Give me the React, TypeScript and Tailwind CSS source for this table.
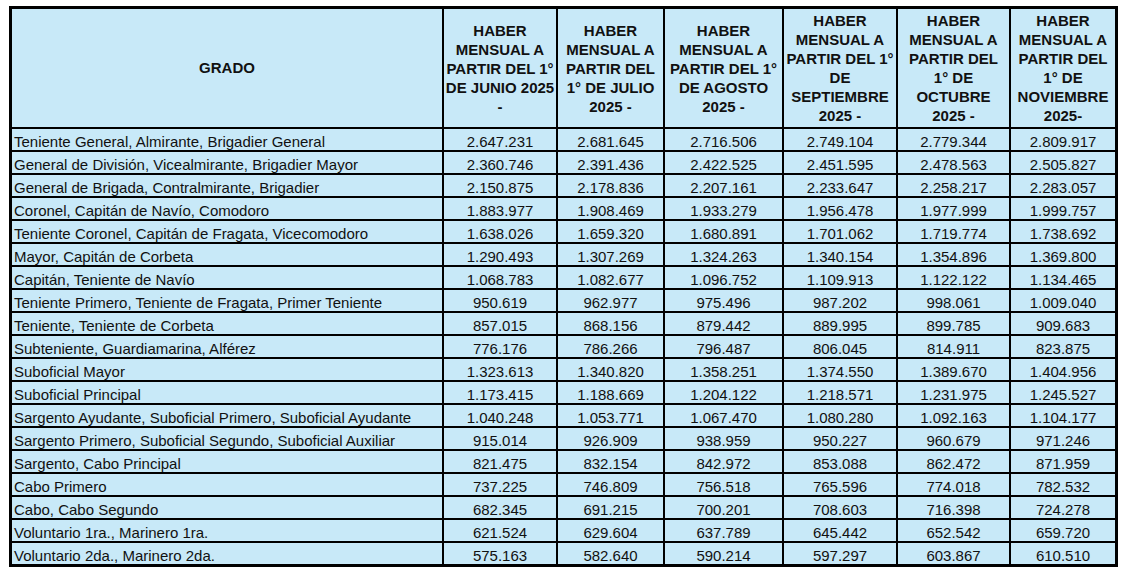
const headers: string[][] = [
  ["HABER", "MENSUAL A", "PARTIR DEL 1°", "DE JUNIO 2025", "-"],
  ["HABER", "MENSUAL A", "PARTIR DEL", "1° DE JULIO", "2025 -"],
  ["HABER", "MENSUAL A", "PARTIR DEL 1°", "DE AGOSTO", "2025 -"],
  ["HABER", "MENSUAL A", "PARTIR DEL 1°", "DE", "SEPTIEMBRE", "2025 -"],
  ["HABER", "MENSUAL A", "PARTIR DEL", "1° DE", "OCTUBRE", "2025 -"],
  ["HABER", "MENSUAL A", "PARTIR DEL", "1° DE", "NOVIEMBRE", "2025-"],
];

const rows: [string, string[]][] = [
  ["Teniente General, Almirante, Brigadier General", ["2.647.231", "2.681.645", "2.716.506", "2.749.104", "2.779.344", "2.809.917"]],
  ["General de División, Vicealmirante, Brigadier Mayor", ["2.360.746", "2.391.436", "2.422.525", "2.451.595", "2.478.563", "2.505.827"]],
  ["General de Brigada, Contralmirante, Brigadier", ["2.150.875", "2.178.836", "2.207.161", "2.233.647", "2.258.217", "2.283.057"]],
  ["Coronel, Capitán de Navío, Comodoro", ["1.883.977", "1.908.469", "1.933.279", "1.956.478", "1.977.999", "1.999.757"]],
  ["Teniente Coronel, Capitán de Fragata, Vicecomodoro", ["1.638.026", "1.659.320", "1.680.891", "1.701.062", "1.719.774", "1.738.692"]],
  ["Mayor, Capitán de Corbeta", ["1.290.493", "1.307.269", "1.324.263", "1.340.154", "1.354.896", "1.369.800"]],
  ["Capitán, Teniente de Navío", ["1.068.783", "1.082.677", "1.096.752", "1.109.913", "1.122.122", "1.134.465"]],
  ["Teniente Primero, Teniente de Fragata, Primer Teniente", ["950.619", "962.977", "975.496", "987.202", "998.061", "1.009.040"]],
  ["Teniente, Teniente de Corbeta", ["857.015", "868.156", "879.442", "889.995", "899.785", "909.683"]],
  ["Subteniente, Guardiamarina, Alférez", ["776.176", "786.266", "796.487", "806.045", "814.911", "823.875"]],
  ["Suboficial Mayor", ["1.323.613", "1.340.820", "1.358.251", "1.374.550", "1.389.670", "1.404.956"]],
  ["Suboficial Principal", ["1.173.415", "1.188.669", "1.204.122", "1.218.571", "1.231.975", "1.245.527"]],
  ["Sargento Ayudante, Suboficial Primero, Suboficial Ayudante", ["1.040.248", "1.053.771", "1.067.470", "1.080.280", "1.092.163", "1.104.177"]],
  ["Sargento Primero, Suboficial Segundo, Suboficial Auxiliar", ["915.014", "926.909", "938.959", "950.227", "960.679", "971.246"]],
  ["Sargento, Cabo Principal", ["821.475", "832.154", "842.972", "853.088", "862.472", "871.959"]],
  ["Cabo Primero", ["737.225", "746.809", "756.518", "765.596", "774.018", "782.532"]],
  ["Cabo, Cabo Segundo", ["682.345", "691.215", "700.201", "708.603", "716.398", "724.278"]],
  ["Voluntario 1ra., Marinero 1ra.", ["621.524", "629.604", "637.789", "645.442", "652.542", "659.720"]],
  ["Voluntario 2da., Marinero 2da.", ["575.163", "582.640", "590.214", "597.297", "603.867", "610.510"]],
];

const App = () => {
  return (
    <div className="min-h-screen bg-white pl-[9px] pt-[6px] font-['Liberation_Sans',Arial,sans-serif] text-[15px] text-[#111]">
      <div className="grid w-max grid-cols-[430px_112px_105px_117px_112px_111px_104px] gap-[2px] border-[3px] border-black bg-black">
        {/* Header */}
        <div className="flex h-[118px] items-center justify-center bg-[#c8e9f8] font-bold">GRADO</div>
        {headers.map((lines, i) => (
          <div
            key={i}
            className="flex h-[118px] flex-col items-center justify-center bg-[#c8e9f8] text-center font-bold leading-[19px]"
          >
            {lines.map((l, j) => (
              <span key={j} className="whitespace-nowrap">{l}</span>
            ))}
          </div>
        ))}

        {/* Rows */}
        {rows.map(([grado, values]) => (
          <div key={grado} className="contents">
            <div className="flex h-[21px] items-end whitespace-nowrap bg-[#c8e9f8] pl-[2px] leading-[17px]">
              {grado}
            </div>
            {values.map((v, k) => (
              <div key={k} className="flex h-[21px] items-end justify-center bg-[#c8e9f8] leading-[17px]">
                {v}
              </div>
            ))}
          </div>
        ))}
      </div>
    </div>
  );
};

export default App;
